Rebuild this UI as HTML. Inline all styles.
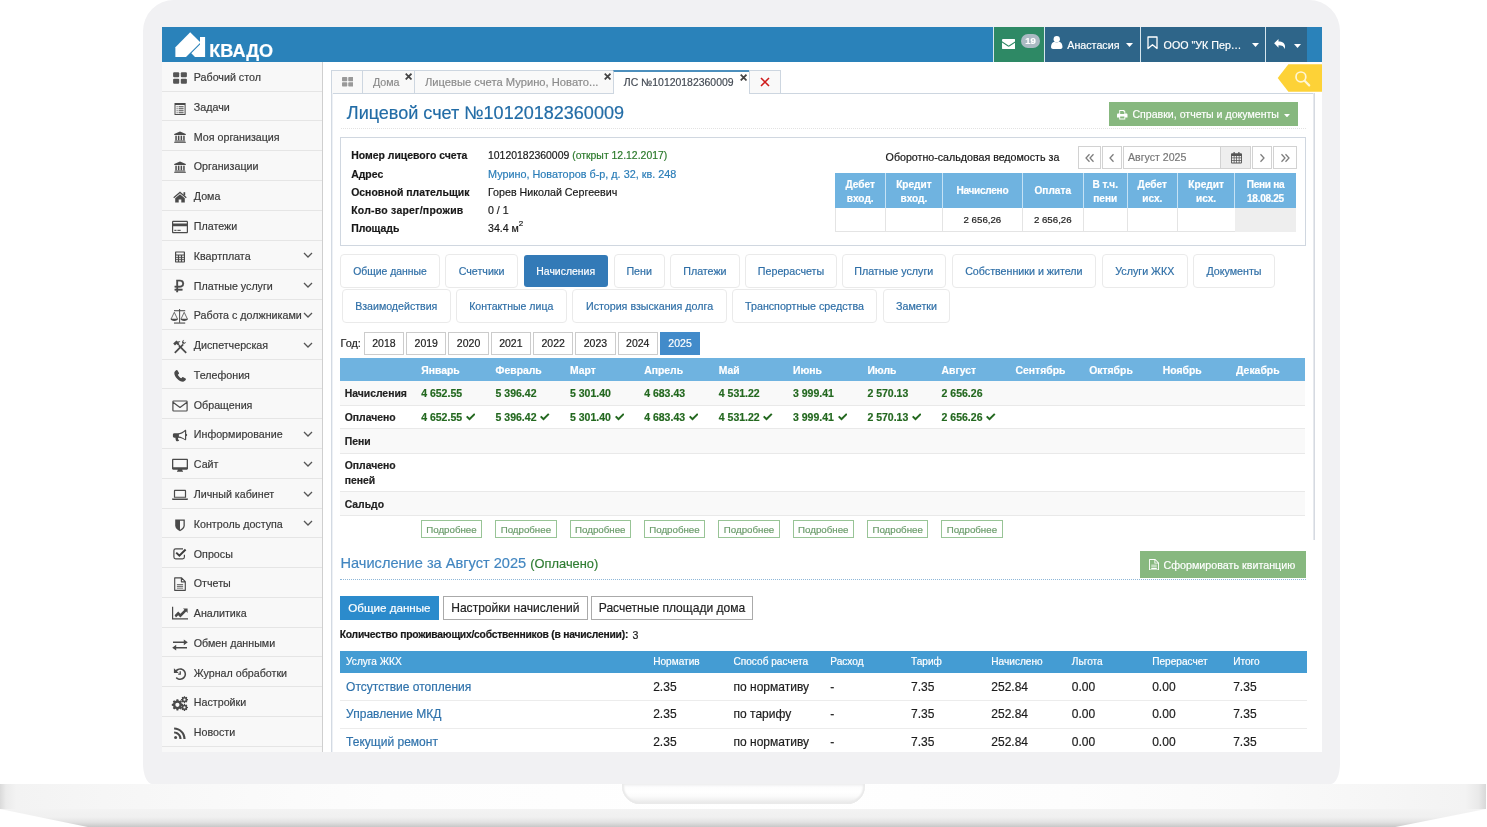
<!DOCTYPE html>
<html lang="ru">
<head>
<meta charset="utf-8">
<title>КВАДО — Лицевой счет №10120182360009</title>
<style>
*{box-sizing:border-box;margin:0;padding:0}
html,body{width:1487px;height:827px;overflow:hidden;background:#fff}
body{position:relative;font-family:"Liberation Sans",sans-serif;font-size:10.7px;color:#393939;line-height:1.2;-webkit-text-stroke:.18px}
.grp{position:absolute;left:0;top:0;width:0;height:0}
div,span,a,svg,b,i,h1,h2,p{position:absolute;white-space:nowrap}
h1,h2{font-weight:400}
i{font-style:normal}
a{text-decoration:none;color:#337ab7}
b{font-weight:700}
/* laptop */
#lid{left:143.3px;top:-.5px;width:1197.2px;height:784px;background:#f1f1f3;border-radius:31px 31px 9px 9px/31px 31px 21px 21px}
#base1{left:0;top:783.5px;width:1486px;height:25.5px;background:linear-gradient(90deg,#dadada 0,#ebebeb .4%,#f3f3f3 1.1%,#f6f6f6 7%,#fafafa 17%,#fdfdfd 26%,#fff 50%,#fdfdfd 72%,#fafafa 84%,#f6f6f6 93%,#f3f3f3 98.6%,#e9e9e9 99.5%,#d8d8d8 100%)}
#base2{left:0;top:809px;width:1486px;height:18px;background:linear-gradient(180deg,#f3f3f3 0,#f0f0f0 45%,#e3e3e3 72%,#c8c8c8 100%);clip-path:polygon(0 0,100% 0,93.9% 100%,5.9% 100%)}
#notch{left:622px;top:783.5px;width:243px;height:20px;border-radius:0 0 18px 18px;background:linear-gradient(180deg,#f3f3f4 0,#fdfdfd 18%,#fff 40%,#fbfbfb 62%,#efefef 85%,#ececec 100%);box-shadow:inset 2px 0 2px #eaeaea,inset -2px 0 2px #eaeaea,inset 0 -2px 2px #e9e9e9}
#screen{left:162px;top:27px;width:1160px;height:725px;overflow:hidden;background:#fff}
#pg{left:-162px;top:-27px;width:1487px;height:827px;will-change:transform}
/* navbar */
#nav{left:162px;top:27px;width:1160px;height:35px;background:#2a82ba}
.nv{top:27px;height:35px;color:#fff;font-size:10.7px}
.nv span{top:11.5px}
/* sidebar */
#sb{left:162px;top:62px;width:160.5px;height:690px;background:#f8f8f8}
#sbr{left:322.3px;top:62px;width:1px;height:690px;background:#cfcfcf}
.sl{left:162px;width:160.3px;height:1px;background:#e5e5e5}
svg.ic{left:170px;width:20px;height:20px;fill:#4a4a4a}
svg.ch{left:302.5px;width:10px;height:10px;fill:none;stroke:#555;stroke-width:1.3}
</style>
</head>
<body>
<div id="lid"></div>
<div id="base1"></div>
<div id="base2"></div>
<div id="notch"></div>
<div id="screen"><div id="pg">
<header class="grp">
<div id="nav"></div>
<svg style="left:174px;top:31px;width:33px;height:27px" viewBox="174 31 33 27"><path fill="#fff" d="M175.4 47.2 190.2 32.3 200.5 42.6 186 57H175.4Z"/><path fill="#fff" d="M200 37h5.1v20H195l-3.7-3.7 8.7-8.8Z"/></svg>
<b style="left:209.2px;top:41px;font-size:18.1px;color:#fff;font-weight:700">КВАДО</b>
<div class="nv" style="left:993px;width:1px;background:#d6e6ee"></div>
<div class="nv" style="left:994px;width:50px;background:#2e8965">
 <svg style="left:7.6px;top:11.5px;width:13.3px;height:10.3px" viewBox="0 0 27 21"><path fill="#fff" d="M0 4.5V2.3C0 1 1 0 2.3 0h22.4C26 0 27 1 27 2.3v2.2L14.6 13c-.7.5-1.500.5-2.200 0Z"/><path fill="#fff" d="M0 7.300 11.300 15c1.400.9 3 .9 4.400 0L27 7.300v11.400c0 1.300-1 2.300-2.300 2.300H2.300C1 21 0 20 0 18.700Z"/></svg>
 <div style="left:27px;top:7px;width:19px;height:13.5px;border-radius:7px;background:#abbac3;color:#fff;font-size:9.5px;font-weight:700;text-align:center;line-height:13.5px">19</div>
</div>
<div class="nv" style="left:1044px;width:1px;background:#d6e6ee"></div>
<div class="nv" style="left:1045px;width:95px;background:#2e6589">
 <svg style="left:6px;top:9px;width:11.5px;height:13px" viewBox="0 0 23 26"><circle cx="11.5" cy="6.500" r="6.300" fill="#fff"/><path fill="#fff" d="M0 22c0-6 3-10 7-10.500 1.300 1 2.800 1.500 4.500 1.500s3.200-.5 4.500-1.500C20 12 23 16 23 22c0 2.500-1.800 4-4 4H4c-2.200 0-4-1.500-4-4Z"/></svg>
 <span style="left:22.3px">Анастасия</span>
 <svg style="left:80.500px;top:15.500px;width:7px;height:4.4px" viewBox="0 0 8 5"><path fill="#fff" d="M0 0h8L4 4.500Z"/></svg>
</div>
<div class="nv" style="left:1140px;width:1px;background:#d6e6ee"></div>
<div class="nv" style="left:1141px;width:124px;background:#2e6589">
 <svg style="left:6px;top:9px;width:11px;height:13.5px" viewBox="0 0 22 27"><path fill="none" stroke="#fff" stroke-width="2.600" stroke-linejoin="round" d="M2 2h18v23l-9-7.500L2 25Z"/></svg>
 <span style="left:22.6px">ООО "УК Пер…</span>
 <svg style="left:110.500px;top:15.500px;width:7px;height:4.4px" viewBox="0 0 8 5"><path fill="#fff" d="M0 0h8L4 4.500Z"/></svg>
</div>
<div class="nv" style="left:1265px;width:1px;background:#d6e6ee"></div>
<div class="nv" style="left:1266px;width:41px;background:#2e6589">
 <svg style="left:8.4px;top:12.3px;width:11.2px;height:10px" viewBox="0 0 25 23"><path fill="#fff" d="M10 0v5.500c9 0 15 4 15 12 0 2-.5 4-1.500 5.500-.8-6-5-8.500-13.500-8.500V20L0 10Z"/></svg>
 <svg style="left:27.500px;top:16.5px;width:7px;height:4.4px" viewBox="0 0 8 5"><path fill="#fff" d="M0 0h8L4 4.500Z"/></svg>
</div>
</header>
<aside class="grp">
<div id="sb"></div>
<div class="sl" style="top:91px"></div><svg class="ic" style="top:68.1px" viewBox="0 0 20 20"><g fill="#555"><rect x="3.100" y="4.300" width="6.100" height="4.900" rx="1"/><rect x="10.800" y="4.300" width="6.100" height="4.900" rx="1"/><rect x="3.100" y="10.800" width="6.100" height="4.900" rx="1"/><rect x="10.800" y="10.800" width="6.100" height="4.900" rx="1"/></g></svg><span style="left:193.8px;top:71px;font-size:10.7px;color:#3a3a3a">Рабочий стол</span>
<div class="sl" style="top:120px"></div><svg class="ic" style="top:98.78px" viewBox="0 0 20 20"><path fill-rule="evenodd" d="M4.500 4h11.100v12H4.500ZM5.500 5.900v9.100h9.100V5.900Z"/><path d="M6.600 7.200h1v1h-1ZM8.600 7.200h5v1h-5ZM6.600 9.200h1v1h-1ZM8.600 9.200h5v1h-5ZM6.600 11.200h1v1h-1ZM8.600 11.200h5v1h-5ZM6.600 13.200h1v1h-1ZM8.600 13.200h5v1h-5Z"/></svg><span style="left:193.8px;top:101px;font-size:10.7px;color:#3a3a3a">Задачи</span>
<div class="sl" style="top:150px"></div><svg class="ic" style="top:126.96px" viewBox="0 0 20 20"><path d="M10 4.400 15.800 7v1.100H4.200V7Z"/><rect x="5.300" y="8.700" width="1.500" height="4.600"/><rect x="7.900" y="8.700" width="1.500" height="4.600"/><rect x="10.600" y="8.700" width="1.500" height="4.600"/><rect x="13.200" y="8.700" width="1.500" height="4.600"/><rect x="4.800" y="13.500" width="10.400" height="1"/><rect x="4.200" y="14.800" width="11.600" height="1"/></svg><span style="left:193.8px;top:131px;font-size:10.7px;color:#3a3a3a">Моя организация</span>
<div class="sl" style="top:180px"></div><svg class="ic" style="top:156.74px" viewBox="0 0 20 20"><path d="M10 4.400 15.800 7v1.100H4.200V7Z"/><rect x="5.300" y="8.700" width="1.500" height="4.600"/><rect x="7.900" y="8.700" width="1.500" height="4.600"/><rect x="10.600" y="8.700" width="1.500" height="4.600"/><rect x="13.200" y="8.700" width="1.500" height="4.600"/><rect x="4.800" y="13.500" width="10.400" height="1"/><rect x="4.200" y="14.800" width="11.600" height="1"/></svg><span style="left:193.8px;top:160px;font-size:10.7px;color:#3a3a3a">Организации</span>
<div class="sl" style="top:210px"></div><svg class="ic" style="top:187.12px" viewBox="0 0 20 20"><path d="M10 4.500 16.700 10.200 15.900 11.200 10 6.300 4.100 11.200 3.300 10.200Z"/><rect x="13.500" y="5.200" width="1.700" height="3.200"/><path d="M10 7.300 14.800 11.300V15.500H11.300V12.500H8.700V15.500H5.200V11.300Z"/></svg><span style="left:193.8px;top:190px;font-size:10.7px;color:#3a3a3a">Дома</span>
<div class="sl" style="top:240px"></div><svg class="ic" style="top:217.3px" viewBox="0 0 20 20"><path fill-rule="evenodd" d="M3.300 3.800h13.400c.8 0 1.300.6 1.300 1.300v9.800c0 .7-.5 1.300-1.300 1.300H3.300c-.8 0-1.300-.6-1.300-1.300V5.100c0-.7.500-1.300 1.300-1.300ZM3.200 5v1.500h13.600V5ZM3.200 9.300v5.700h13.600V9.300Z"/><rect x="4.300" y="12.800" width="2.200" height="1.100"/><rect x="7.400" y="12.800" width="3.300" height="1.100"/></svg><span style="left:193.8px;top:220px;font-size:10.7px;color:#3a3a3a">Платежи</span>
<div class="sl" style="top:269px"></div><svg class="ic" style="top:246.68px" viewBox="0 0 20 20"><path fill-rule="evenodd" d="M6 4.400h8c.6 0 1 .4 1 1v9.200c0 .6-.4 1-1 1H6c-.6 0-1-.4-1-1V5.400c0-.6.400-1 1-1ZM6.200 5.600v2h7.600v-2ZM6.200 8.600v1.400h1.600V8.600ZM9.200 8.600v1.400h1.600V8.600ZM12.200 8.600v1.400h1.600V8.600ZM6.200 10.800v1.400h1.600v-1.400ZM9.200 10.800v1.400h1.600v-1.400ZM12.200 10.800v1.400h1.600v-1.400ZM6.200 13v1.400h1.600V13ZM9.200 13v1.400h1.600V13ZM12.200 13v1.400h1.600V13Z"/></svg><span style="left:193.8px;top:250px;font-size:10.7px;color:#3a3a3a">Квартплата</span><svg class="ch" style="top:250.38px" viewBox="0 0 10 10"><path d="M1 3 5 7 9 3"/></svg>
<div class="sl" style="top:299px"></div><i style="left:174.3px;top:277px;font-size:16.2px;color:#4a4a4a;font-weight:400;font-family:'DejaVu Sans',sans-serif;-webkit-text-stroke:.3px #4a4a4a">₽</i><span style="left:193.8px;top:280px;font-size:10.7px;color:#3a3a3a">Платные услуги</span><svg class="ch" style="top:280.16px" viewBox="0 0 10 10"><path d="M1 3 5 7 9 3"/></svg>
<div class="sl" style="top:329px"></div><svg class="ic" style="top:306.24px" viewBox="0 0 20 20"><rect x="4" y="4" width="11.200" height="1.300" fill="#6a6a6a"/><rect x="9.100" y="3" width="1" height="13.800"/><rect x="4" y="16.500" width="11.200" height="1.100"/><path fill="none" stroke="#4a4a4a" stroke-width=".8" d="M4.300 6.300 1.100 13M4.300 6.300 7.500 13M14.200 6.300 11 13M14.200 6.300 17.400 13"/><path d="M.600 12.800h7.400c0 1.300-1.700 2.100-3.700 2.100s-3.700-.8-3.700-2.100ZM10.500 12.800h7.400c0 1.300-1.700 2.100-3.700 2.100s-3.700-.8-3.700-2.100Z"/></svg><span style="left:193.8px;top:309px;font-size:10.7px;color:#3a3a3a">Работа с должниками</span><svg class="ch" style="top:309.94px" viewBox="0 0 10 10"><path d="M1 3 5 7 9 3"/></svg>
<div class="sl" style="top:359px"></div><svg class="ic" style="top:336.62px" viewBox="0 0 20 20"><path d="M4.200 15.200 12.600 6.800 13.800 8 5.400 16.400Z"/><path d="M12.200 6.200c-.5-1.500.3-3.100 1.900-3.500l-.9 1.700 1.300 1.300 1.700-.9c-.4 1.600-2 2.400-3.500 1.900Z"/><path d="M15.600 16.400 8.200 9 9.400 7.800 16.800 15.200Z"/><path d="M3.200 6.600 6.400 3.600 7.600 4.600 9.800 4.200 10.400 4.800 8.400 5.800 9.600 7.200 8.200 8.600 6.600 7 5 8.600Z"/></svg><span style="left:193.8px;top:339px;font-size:10.7px;color:#3a3a3a">Диспетчерская</span><svg class="ch" style="top:339.72px" viewBox="0 0 10 10"><path d="M1 3 5 7 9 3"/></svg>
<div class="sl" style="top:388px"></div><svg class="ic" style="top:365.8px" viewBox="0 0 20 20"><path d="M6.300 4.200c.4-.3.900-.2 1.200.2l1.400 2.300c.3.500.1.900-.2 1.200l-.9.800c.7 1.500 2 2.800 3.500 3.600l.8-.9c.3-.3.800-.5 1.200-.2l2.300 1.400c.4.300.5.800.2 1.200-.8 1.100-1.700 1.900-2.800 1.900C9.100 15.700 4.300 10.900 4.300 7c0-1.100.8-2 2-2.800Z"/></svg><span style="left:193.8px;top:369px;font-size:10.7px;color:#3a3a3a">Телефония</span>
<div class="sl" style="top:418px"></div><svg class="ic" style="top:396.18px" viewBox="0 0 20 20"><path fill="none" stroke="#4a4a4a" stroke-width="1.200" stroke-linejoin="round" d="M3.700 5h12.600c.5 0 .8.300.8.800v8.400c0 .5-.3.800-.8.800H3.700c-.5 0-.8-.3-.8-.8V5.800c0-.5.300-.8.800-.8ZM3 6.300 10 11.500 17 6.300"/></svg><span style="left:193.8px;top:399px;font-size:10.7px;color:#3a3a3a">Обращения</span>
<div class="sl" style="top:448px"></div><svg class="ic" style="top:426.36px" viewBox="0 0 20 20"><path d="M15.200 3.800c.5-.2 1 .1 1 .7v3.200c.6.200 1 .7 1 1.300s-.4 1.100-1 1.300v3.200c0 .6-.5.900-1 .7-2.200-1.400-4.300-2.300-6.700-2.500-.6.400-.7 1-.3 1.500.2.500.7.900 1 1.400-.5.900-2.300 1-3 .3-.4-1.100-.9-2.100-.7-3.200H4.300c-.8 0-1.400-.6-1.400-1.400V8.700c0-.8.600-1.400 1.400-1.400h3.500c2.700-.1 5.100-1.500 7.400-3.500ZM15 5.500c-1.900 1.500-3.900 2.600-6.100 2.900v2.200c2.200.3 4.200 1.300 6.100 2.700Z" fill-rule="evenodd"/></svg><span style="left:193.8px;top:428px;font-size:10.7px;color:#3a3a3a">Информирование</span><svg class="ch" style="top:429.06px" viewBox="0 0 10 10"><path d="M1 3 5 7 9 3"/></svg>
<div class="sl" style="top:478px"></div><svg class="ic" style="top:455.14px" viewBox="0 0 20 20"><path fill-rule="evenodd" d="M3.200 3.800h13.600c.7 0 1.200.5 1.200 1.200v8.600c0 .7-.5 1.200-1.200 1.200h-4.600c0 .6.300 1.100.8 1.400v.6H7v-.6c.5-.3.800-.8.800-1.400H3.200c-.7 0-1.200-.5-1.200-1.200V5c0-.7.500-1.200 1.200-1.200ZM3.300 5v7.200h13.400V5Z"/></svg><span style="left:193.8px;top:458px;font-size:10.7px;color:#3a3a3a">Сайт</span><svg class="ch" style="top:458.84px" viewBox="0 0 10 10"><path d="M1 3 5 7 9 3"/></svg>
<div class="sl" style="top:508px"></div><svg class="ic" style="top:484.92px" viewBox="0 0 20 20"><path fill-rule="evenodd" d="M5 4.800h10c.6 0 1.100.5 1.100 1.100v6.900H3.900V5.900c0-.6.5-1.100 1.100-1.100ZM5.100 5.900v5.800h9.800v-5.800Z"/><path d="M2 13.500h16v.4c0 .6-.6 1-1.300 1H3.300c-.7 0-1.300-.4-1.300-1Z"/></svg><span style="left:193.8px;top:488px;font-size:10.7px;color:#3a3a3a">Личный кабинет</span><svg class="ch" style="top:488.62px" viewBox="0 0 10 10"><path d="M1 3 5 7 9 3"/></svg>
<div class="sl" style="top:537px"></div><svg class="ic" style="top:514.7px" viewBox="0 0 20 20"><path d="M5.200 4.400h9.600v6.200c0 2.400-1.900 4.200-4.800 5.600-2.900-1.400-4.800-3.200-4.800-5.600Z"/><path fill="#f8f8f8" d="M10 5.700h3.500v4.900c0 1.700-1.300 3-3.500 4.100Z"/></svg><span style="left:193.8px;top:518px;font-size:10.7px;color:#3a3a3a">Контроль доступа</span><svg class="ch" style="top:518.4px" viewBox="0 0 10 10"><path d="M1 3 5 7 9 3"/></svg>
<div class="sl" style="top:567px"></div><svg class="ic" style="top:544.48px" viewBox="0 0 20 20"><path fill="none" stroke="#4a4a4a" stroke-width="1.200" d="M14.400 10.800v2.200c0 1-.8 1.800-1.800 1.800H5.700c-1 0-1.800-.8-1.800-1.800V6.600c0-1 .8-1.800 1.800-1.800h7.300"/><path fill="none" stroke="#3c3c3c" stroke-width="2" d="M6.200 8.600 9.400 11.700 15.600 5.500"/></svg><span style="left:193.8px;top:548px;font-size:10.7px;color:#3a3a3a">Опросы</span>
<div class="sl" style="top:597px"></div><svg class="ic" style="top:574.26px" viewBox="0 0 20 20"><path fill="none" stroke="#4a4a4a" stroke-width="1.150" stroke-linejoin="round" d="M4.700 3.900h6.900l3.700 3.700v8.700H4.700ZM11.400 4.100v3.700h3.700"/><path d="M6.900 9.900h6.200v.9H6.900ZM6.900 11.800h6.200v.9H6.900ZM6.900 13.700h6.200v.9H6.900Z"/></svg><span style="left:193.8px;top:577px;font-size:10.7px;color:#3a3a3a">Отчеты</span>
<div class="sl" style="top:627px"></div><svg class="ic" style="top:603.34px" viewBox="0 0 20 20"><path d="M2 3.800h1.200v11.400H18v1.200H2Z"/><path d="M4.600 12.200 8.200 8.600 10.400 10.800 14.400 6.800 13 5.400H17.600V10L16.200 8.600 10.400 14.400 8.200 12.200 6 14.400Z"/></svg><span style="left:193.8px;top:607px;font-size:10.7px;color:#3a3a3a">Аналитика</span>
<div class="sl" style="top:656px"></div><svg class="ic" style="top:634.52px" viewBox="0 0 20 20"><path d="M3 6.600h10.800V4.400L17.800 7.300 13.800 10.200V8H3Z"/><path d="M17 13.400H6.200V15.600L2.200 12.700 6.200 9.800V12H17Z"/></svg><span style="left:193.8px;top:637px;font-size:10.7px;color:#3a3a3a">Обмен данными</span>
<div class="sl" style="top:686px"></div><svg class="ic" style="top:663.6px" viewBox="0 0 20 20"><path d="M10.200 4.200c3.300 0 5.900 2.600 5.900 5.900s-2.600 5.900-5.900 5.900c-1.800 0-3.400-.8-4.500-2.100l1.200-1c.8 1 2 1.600 3.300 1.600 2.400 0 4.400-2 4.400-4.400s-2-4.400-4.400-4.400c-1.300 0-2.500.6-3.300 1.500L8.700 9H3.900V4.200l1.900 1.900c1.100-1.200 2.700-1.900 4.400-1.900Z"/><path d="M9.600 7.200h1.300v3.500H8.200V9.500h1.400Z"/></svg><span style="left:193.8px;top:667px;font-size:10.7px;color:#3a3a3a">Журнал обработки</span>
<div class="sl" style="top:716px"></div><svg class="ic" style="top:693.88px" viewBox="0 0 20 20"><path fill-rule="evenodd" d="M6.500 5.200h1.800l.3 1.300 1 .4 1.100-.7 1.300 1.300-.7 1.100.4 1 1.300.3v1.800l-1.300.3-.4 1 .7 1.100-1.300 1.300-1.100-.7-1 .4-.3 1.300H6.500l-.3-1.300-1-.4-1.100.7-1.300-1.300.7-1.100-.4-1-1.300-.3V9.900l1.300-.3.4-1-.7-1.100 1.300-1.300 1.100.7 1-.4ZM7.400 8.700a2.100 2.100 0 1 0 0 4.200 2.100 2.100 0 1 0 0-4.200Z"/><path fill-rule="evenodd" d="M14.700 2.800h1.200l.2.900.7.300.8-.5.800.8-.5.800.3.700.9.200v1.200l-.9.200-.3.700.5.800-.8.800-.8-.5-.7.300-.2.900h-1.200l-.2-.9-.7-.3-.8.500-.800-.8.500-.8-.3-.7-.9-.2V6l.9-.2.3-.7-.5-.8.800-.8.800.5.700-.3ZM15.300 5.400a1.200 1.200 0 1 0 0 2.400 1.200 1.200 0 1 0 0-2.400Z" transform="translate(.4 -.4) scale(.92)"/><path fill-rule="evenodd" d="M14.700 2.800h1.200l.2.900.7.300.8-.5.800.8-.5.800.3.700.9.200v1.200l-.9.200-.3.700.5.800-.8.800-.8-.5-.7.300-.2.900h-1.200l-.2-.9-.7-.3-.8.500-.800-.8.500-.8-.3-.7-.9-.2V6l.9-.2.3-.7-.5-.8.800-.8.800.5.700-.3ZM15.300 5.400a1.200 1.200 0 1 0 0 2.400 1.200 1.200 0 1 0 0-2.400Z" transform="translate(.4 7.400) scale(.92)"/></svg><span style="left:193.8px;top:696px;font-size:10.7px;color:#3a3a3a">Настройки</span>
<div class="sl" style="top:746px"></div><svg class="ic" style="top:723.16px" viewBox="0 0 20 20"><circle cx="5.600" cy="14.400" r="1.500"/><path d="M4.100 8.400c4.100 0 7.500 3.400 7.500 7.500H9.400c0-2.900-2.400-5.300-5.300-5.300Z"/><path d="M4.100 4.400c6.300 0 11.500 5.200 11.500 11.500h-2.200c0-5.100-4.200-9.300-9.300-9.300Z"/></svg><span style="left:193.8px;top:726px;font-size:10.7px;color:#3a3a3a">Новости</span>
<div id="sbr"></div>
</aside>
<main class="grp">
<!-- tabs -->
<div style="left:331px;top:93px;width:984px;height:1px;background:#cdd6e0"></div><div style="left:331px;top:93px;width:2px;height:667px;background:linear-gradient(90deg,#d3dae3 0,#d3dae3 50%,#eef1f5 50%)"></div><div style="left:1313px;top:93px;width:2px;height:447px;background:linear-gradient(90deg,#e6e9ee 0,#e6e9ee 50%,#d6dae1 50%)"></div><div style="left:331px;top:70px;width:32px;height:23px;background:#f9f9f9;border:1px solid #cdd6e0;border-bottom:0"><svg style="left:9.5px;top:6px;width:11.5px;height:9.5px" viewBox="0 0 14 11.6"><g fill="#999"><rect width="6.4" height="5.2" rx=".9"/><rect x="7.6" width="6.4" height="5.2" rx=".9"/><rect y="6.400" width="6.4" height="5.2" rx=".9"/><rect x="7.6" y="6.400" width="6.4" height="5.2" rx=".9"/></g></svg></div><div style="left:362px;top:70px;width:53px;height:23px;background:#f9f9f9;border:1px solid #cdd6e0;border-bottom:0"></div><div style="left:414px;top:70px;width:200px;height:23px;background:#f9f9f9;border:1px solid #cdd6e0;border-bottom:0"></div><div style="left:613px;top:70px;width:137px;height:24px;background:#fff;border:1px solid #cdd6e0;border-top:2px solid #4c8fbd;border-bottom:0"></div><div style="left:749px;top:70px;width:32px;height:23px;background:#f9f9f9;border:1px solid #cdd6e0;border-bottom:0"></div><span style="left:372.9px;top:76px;font-size:10.7px;color:#8c8c8c">Дома</span><svg style="left:405px;top:73px;width:7.2px;height:7.2px" viewBox="0 0 10 10"><path d="M1 1 9 9M9 1 1 9" stroke="#444" stroke-width="2.36" fill="none"/></svg><span style="left:424.9px;top:76px;font-size:11.2px;color:#8c8c8c">Лицевые счета Мурино, Новато...</span><svg style="left:603.8px;top:73px;width:7.2px;height:7.2px" viewBox="0 0 10 10"><path d="M1 1 9 9M9 1 1 9" stroke="#444" stroke-width="2.36" fill="none"/></svg><span style="left:623.8px;top:77px;font-size:10.45px;color:#434a54">ЛС №10120182360009</span><svg style="left:739.6px;top:73.9px;width:7.2px;height:7.2px" viewBox="0 0 10 10"><path d="M1 1 9 9M9 1 1 9" stroke="#444" stroke-width="2.36" fill="none"/></svg><svg style="left:759.8px;top:76.9px;width:10px;height:10px" viewBox="0 0 10 10"><path d="M1 1 9 9M9 1 1 9" stroke="#cf1b1b" stroke-width="1.6" fill="none"/></svg>
<!-- yellow search tag -->
<svg style="left:1277px;top:64px;width:45px;height:28px" viewBox="1277 64 45 28"><path fill="#fdd237" d="M1277.7 77.900 1288.400 64.200H1322V91.700H1288.400Z"/><circle cx="1300.900" cy="76.900" r="4.900" fill="none" stroke="#fff6d4" stroke-width="1.700"/><path d="M1304.600 80.800 1309.200 85.400" stroke="#fff6d4" stroke-width="2.200" stroke-linecap="round"/></svg>
<!-- page header -->
<h1 style="left:346.8px;top:103px;font-size:18.05px;color:#226ca6;font-weight:400;line-height:1.2">Лицевой счет №10120182360009</h1><div style="left:341px;top:128.2px;width:964.5px;height:1px;border-top:1px dotted #e2e2e2"></div><div style="left:1108.6px;top:101.9px;width:189.3px;height:23.8px;background:#87b87f"><svg style="left:8.5px;top:8.2px;width:10.5px;height:9.5px" viewBox="0 0 21 19"><path fill="#fff" fill-rule="evenodd" d="M4.500 0h9.500l2.500 2.500V7h2.300c1.200 0 2.200 1 2.200 2.200V15h-4.500v4h-12v-4H0V9.200C0 8 1 7 2.200 7H4.500ZM6.300 1.800V8h8.400V3.600h-1.800V1.800ZM6.300 13v4.200h8.400V13Z"/></svg><svg style="left:175px;top:11.8px;width:6px;height:3.4px" viewBox="0 0 7 4"><path fill="#fff" d="M0 0h7L3.500 4Z"/></svg></div><span style="left:1132.4px;top:108px;font-size:10.6px;color:#fff">Справки, отчеты и документы</span>
<!-- info box -->
<div style="left:340px;top:137px;width:966px;height:109px;border:1px solid #d0d7e0;background:#fff"></div><b style="left:351.2px;top:150px;font-size:10.45px;color:#181818;font-weight:700">Номер лицевого счета</b><b style="left:351.2px;top:169px;font-size:10.45px;color:#181818;font-weight:700">Адрес</b><b style="left:351.2px;top:187px;font-size:10.45px;color:#181818;font-weight:700">Основной плательщик</b><b style="left:351.2px;top:205px;font-size:10.45px;color:#181818;font-weight:700;letter-spacing:.25px">Кол-во зарег/прожив</b><b style="left:351.2px;top:223px;font-size:10.45px;color:#181818;font-weight:700">Площадь</b><span style="left:488px;top:150px;font-size:10.45px;color:#181818">10120182360009 <span style="position:static;color:#2c7a2c">(открыт 12.12.2017)</span></span><a style="left:488px;top:168px;font-size:10.84px;color:#2a7db8">Мурино, Новаторов б-р, д. 32, кв. 248</a><span style="left:488px;top:186px;font-size:10.69px;color:#181818">Горев Николай Сергеевич</span><span style="left:488px;top:204px;font-size:10.6px;color:#181818">0 / 1</span><span style="left:488px;top:222px;font-size:10.6px;color:#181818">34.4 м<sup style="font-size:8px;position:relative;top:-1px;vertical-align:super;line-height:0">2</sup></span><span style="left:885.6px;top:151px;font-size:10.67px;color:#161616">Оборотно-сальдовая ведомость за</span><div style="left:1078px;top:146px;width:23px;height:23px;border:1px solid #d2d2d2;background:#fff"><svg style="left:50%;top:50%;width:12px;height:10px;margin:-5px 0 0 -6px" viewBox="0 0 12 10"><path d="M5.500 1.300 2 5l3.500 3.700M9.500 1.300 6 5l3.500 3.700" fill="none" stroke="#7c7c7c" stroke-width="1.250"/></svg></div><div style="left:1102px;top:146px;width:20px;height:23px;border:1px solid #d2d2d2;background:#fff"><svg style="left:50%;top:50%;width:12px;height:10px;margin:-5px 0 0 -6px" viewBox="0 0 12 10"><path d="M7.500 1.300 4 5l3.500 3.700" fill="none" stroke="#7c7c7c" stroke-width="1.250"/></svg></div><div style="left:1123px;top:146px;width:98px;height:23px;border:1px solid #d2d2d2;background:#fff"></div><span style="left:1128px;top:151px;font-size:10.6px;color:#777">Август 2025</span><div style="left:1220px;top:146px;width:31px;height:23px;border:1px solid #d2d2d2;background:#eee"><svg style="left:9.5px;top:5px;width:11px;height:11.5px" viewBox="0 0 22 23"><path fill="#555" fill-rule="evenodd" d="M5 0h2.500v2.500h7V0H17v2.500h3.200c1 0 1.800.8 1.800 1.800v16.900c0 1-.8 1.800-1.800 1.800H1.800C.8 23 0 22.200 0 21.200V4.300c0-1 .8-1.800 1.800-1.800H5ZM1.800 8v3.200h3.700V8ZM7 8v3.200h3.500V8ZM12 8v3.200h3.500V8ZM17 8v3.200h3.200V8ZM1.800 12.700v3.500h3.700v-3.500ZM7 12.700v3.500h3.500v-3.500ZM12 12.700v3.500h3.500v-3.500ZM17 12.700v3.500h3.200v-3.500ZM1.800 17.700v3.500h3.700v-3.500ZM7 17.700v3.500h3.500v-3.500ZM12 17.700v3.500h3.500v-3.500ZM17 17.700v3.500h3.200v-3.500Z"/></svg></div><div style="left:1252px;top:146px;width:20px;height:23px;border:1px solid #d2d2d2;background:#fff"><svg style="left:50%;top:50%;width:12px;height:10px;margin:-5px 0 0 -6px" viewBox="0 0 12 10"><path d="M4.500 1.300 8 5 4.500 8.700" fill="none" stroke="#7c7c7c" stroke-width="1.250"/></svg></div><div style="left:1273px;top:146px;width:24px;height:23px;border:1px solid #d2d2d2;background:#fff"><svg style="left:50%;top:50%;width:12px;height:10px;margin:-5px 0 0 -6px" viewBox="0 0 12 10"><path d="M2.500 1.300 6 5 2.500 8.700M6.500 1.300 10 5 6.500 8.700" fill="none" stroke="#7c7c7c" stroke-width="1.250"/></svg></div><div style="left:835px;top:172.6px;width:461.1px;height:35.6px;background:#6fb3e0"></div><div style="left:835px;top:208.2px;width:461.1px;height:23.4px;border:1px solid #e4e4e4;border-top:0;background:#fff"></div><div style="left:1234.9px;top:208.2px;width:61.2px;height:23.4px;background:#eee"></div><b style="left:860.2px;top:179px;font-size:10.1px;color:#fff;font-weight:700;transform:translateX(-50%)">Дебет</b><b style="left:860.2px;top:193px;font-size:10.1px;color:#fff;font-weight:700;transform:translateX(-50%)">вход.</b><div style="left:884.9px;top:172.6px;width:1px;height:35.6px;background:#c5e2f5"></div><div style="left:884.9px;top:208.2px;width:1px;height:23.4px;background:#e4e4e4"></div><b style="left:913.9px;top:179px;font-size:10.1px;color:#fff;font-weight:700;transform:translateX(-50%)">Кредит</b><b style="left:913.9px;top:193px;font-size:10.1px;color:#fff;font-weight:700;transform:translateX(-50%)">вход.</b><div style="left:941.9px;top:172.6px;width:1px;height:35.6px;background:#c5e2f5"></div><div style="left:941.9px;top:208.2px;width:1px;height:23.4px;background:#e4e4e4"></div><b style="left:982.4px;top:185px;font-size:10.1px;color:#fff;font-weight:700;transform:translateX(-50%);letter-spacing:-.3px">Начислено</b><span style="left:982.4px;top:214px;font-size:9.7px;color:#222;transform:translateX(-50%)">2 656,26</span><div style="left:1021.9px;top:172.6px;width:1px;height:35.6px;background:#c5e2f5"></div><div style="left:1021.9px;top:208.2px;width:1px;height:23.4px;background:#e4e4e4"></div><b style="left:1052.75px;top:185px;font-size:10.1px;color:#fff;font-weight:700;transform:translateX(-50%)">Оплата</b><span style="left:1052.75px;top:214px;font-size:9.7px;color:#222;transform:translateX(-50%)">2 656,26</span><div style="left:1082.6px;top:172.6px;width:1px;height:35.6px;background:#c5e2f5"></div><div style="left:1082.6px;top:208.2px;width:1px;height:23.4px;background:#e4e4e4"></div><b style="left:1105.2px;top:179px;font-size:10.1px;color:#fff;font-weight:700;transform:translateX(-50%)">В т.ч.</b><b style="left:1105.2px;top:193px;font-size:10.1px;color:#fff;font-weight:700;transform:translateX(-50%)">пени</b><div style="left:1126.8px;top:172.6px;width:1px;height:35.6px;background:#c5e2f5"></div><div style="left:1126.8px;top:208.2px;width:1px;height:23.4px;background:#e4e4e4"></div><b style="left:1152.3px;top:179px;font-size:10.1px;color:#fff;font-weight:700;transform:translateX(-50%)">Дебет</b><b style="left:1152.3px;top:193px;font-size:10.1px;color:#fff;font-weight:700;transform:translateX(-50%)">исх.</b><div style="left:1176.8px;top:172.6px;width:1px;height:35.6px;background:#c5e2f5"></div><div style="left:1176.8px;top:208.2px;width:1px;height:23.4px;background:#e4e4e4"></div><b style="left:1206.1px;top:179px;font-size:10.1px;color:#fff;font-weight:700;transform:translateX(-50%)">Кредит</b><b style="left:1206.1px;top:193px;font-size:10.1px;color:#fff;font-weight:700;transform:translateX(-50%)">исх.</b><div style="left:1234.4px;top:172.6px;width:1px;height:35.6px;background:#c5e2f5"></div><b style="left:1265.5px;top:179px;font-size:10.1px;color:#fff;font-weight:700;transform:translateX(-50%);letter-spacing:-.3px">Пени на</b><b style="left:1265.5px;top:193px;font-size:10.1px;color:#fff;font-weight:700;transform:translateX(-50%);letter-spacing:-.3px">18.08.25</b>
<!-- pills -->
<div style="left:340px;top:254px;width:100px;height:34px;background:#fff;border:1px solid #eaeaea;border-radius:4px"></div><a style="left:390px;top:266px;font-size:10.4px;color:#2f6fa7;transform:translateX(-50%)">Общие данные</a><div style="left:445px;top:254px;width:73px;height:34px;background:#fff;border:1px solid #eaeaea;border-radius:4px"></div><a style="left:481.6px;top:265px;font-size:10.7px;color:#2f6fa7;transform:translateX(-50%)">Счетчики</a><div style="left:524px;top:255px;width:84px;height:32px;background:#337ab7;border-radius:3px"></div><a style="left:565.7px;top:266px;font-size:10.45px;color:#fff;transform:translateX(-50%)">Начисления</a><div style="left:614px;top:254px;width:51px;height:34px;background:#fff;border:1px solid #eaeaea;border-radius:4px"></div><a style="left:639.15px;top:265px;font-size:10.7px;color:#2f6fa7;transform:translateX(-50%)">Пени</a><div style="left:670px;top:254px;width:70px;height:34px;background:#fff;border:1px solid #eaeaea;border-radius:4px"></div><a style="left:704.9px;top:265px;font-size:10.7px;color:#2f6fa7;transform:translateX(-50%)">Платежи</a><div style="left:745px;top:254px;width:92px;height:34px;background:#fff;border:1px solid #eaeaea;border-radius:4px"></div><a style="left:791px;top:265px;font-size:10.7px;color:#2f6fa7;transform:translateX(-50%)">Перерасчеты</a><div style="left:842px;top:254px;width:104px;height:34px;background:#fff;border:1px solid #eaeaea;border-radius:4px"></div><a style="left:893.75px;top:265px;font-size:10.7px;color:#2f6fa7;transform:translateX(-50%)">Платные услуги</a><div style="left:952px;top:254px;width:144px;height:34px;background:#fff;border:1px solid #eaeaea;border-radius:4px"></div><a style="left:1023.85px;top:265px;font-size:10.7px;color:#2f6fa7;transform:translateX(-50%)">Собственники и жители</a><div style="left:1102px;top:254px;width:86px;height:34px;background:#fff;border:1px solid #eaeaea;border-radius:4px"></div><a style="left:1144.8px;top:265px;font-size:10.7px;color:#2f6fa7;transform:translateX(-50%)">Услуги ЖКХ</a><div style="left:1193px;top:254px;width:82px;height:34px;background:#fff;border:1px solid #eaeaea;border-radius:4px"></div><a style="left:1233.95px;top:265px;font-size:10.7px;color:#2f6fa7;transform:translateX(-50%)">Документы</a><div style="left:342px;top:289px;width:109px;height:34px;background:#fff;border:1px solid #eaeaea;border-radius:4px"></div><a style="left:396.25px;top:300px;font-size:10.62px;color:#2f6fa7;transform:translateX(-50%)">Взаимодействия</a><div style="left:456px;top:289px;width:111px;height:34px;background:#fff;border:1px solid #eaeaea;border-radius:4px"></div><a style="left:511.25px;top:300px;font-size:10.55px;color:#2f6fa7;transform:translateX(-50%)">Контактные лица</a><div style="left:572px;top:289px;width:155px;height:34px;background:#fff;border:1px solid #eaeaea;border-radius:4px"></div><a style="left:649.55px;top:300px;font-size:10.7px;color:#2f6fa7;transform:translateX(-50%)">История взыскания долга</a><div style="left:732px;top:289px;width:145px;height:34px;background:#fff;border:1px solid #eaeaea;border-radius:4px"></div><a style="left:804.5px;top:300px;font-size:10.7px;color:#2f6fa7;transform:translateX(-50%)">Транспортные средства</a><div style="left:883px;top:289px;width:67px;height:34px;background:#fff;border:1px solid #eaeaea;border-radius:4px"></div><a style="left:916.5px;top:300px;font-size:10.7px;color:#2f6fa7;transform:translateX(-50%)">Заметки</a>
<!-- years -->
<span style="left:340.5px;top:337px;font-size:10.9px;color:#222">Год:</span><div style="left:364px;top:332px;width:40px;height:23px;background:#fff;border:1px solid #ccc"></div><span style="left:383.95px;top:337px;font-size:10.5px;color:#222;transform:translateX(-50%)">2018</span><div style="left:406px;top:332px;width:40px;height:23px;background:#fff;border:1px solid #ccc"></div><span style="left:426.25px;top:337px;font-size:10.5px;color:#222;transform:translateX(-50%)">2019</span><div style="left:448px;top:332px;width:41px;height:23px;background:#fff;border:1px solid #ccc"></div><span style="left:468.55px;top:337px;font-size:10.5px;color:#222;transform:translateX(-50%)">2020</span><div style="left:491px;top:332px;width:40px;height:23px;background:#fff;border:1px solid #ccc"></div><span style="left:510.85px;top:337px;font-size:10.5px;color:#222;transform:translateX(-50%)">2021</span><div style="left:533px;top:332px;width:40px;height:23px;background:#fff;border:1px solid #ccc"></div><span style="left:553.15px;top:337px;font-size:10.5px;color:#222;transform:translateX(-50%)">2022</span><div style="left:575px;top:332px;width:41px;height:23px;background:#fff;border:1px solid #ccc"></div><span style="left:595.45px;top:337px;font-size:10.5px;color:#222;transform:translateX(-50%)">2023</span><div style="left:618px;top:332px;width:40px;height:23px;background:#fff;border:1px solid #ccc"></div><span style="left:637.75px;top:337px;font-size:10.5px;color:#222;transform:translateX(-50%)">2024</span><div style="left:660px;top:332px;width:40px;height:23px;background:#428bca"></div><span style="left:680.05px;top:337px;font-size:10.5px;color:#fff;transform:translateX(-50%)">2025</span>
<!-- monthly table -->
<div style="left:340px;top:358px;width:965px;height:23.2px;background:#6fb3e0"></div><div style="left:340px;top:381.2px;width:965px;height:24.5px;background:#f9f9f9;border-bottom:1px solid #e9e9e9"></div><div style="left:340px;top:405.7px;width:965px;height:23.7px;background:#fff;border-bottom:1px solid #e9e9e9"></div><div style="left:340px;top:429.4px;width:965px;height:24.2px;background:#f9f9f9;border-bottom:1px solid #e9e9e9"></div><div style="left:340px;top:453.6px;width:965px;height:38.2px;background:#fff;border-bottom:1px solid #e9e9e9"></div><div style="left:340px;top:491.8px;width:965px;height:23.9px;background:#f9f9f9;border-bottom:1px solid #e9e9e9"></div><b style="left:421.2px;top:365px;font-size:10.4px;color:#fff;font-weight:700">Январь</b><b style="left:495.6px;top:365px;font-size:10.4px;color:#fff;font-weight:700">Февраль</b><b style="left:570px;top:365px;font-size:10.4px;color:#fff;font-weight:700">Март</b><b style="left:644.2px;top:365px;font-size:10.4px;color:#fff;font-weight:700">Апрель</b><b style="left:718.8px;top:365px;font-size:10.4px;color:#fff;font-weight:700">Май</b><b style="left:793px;top:365px;font-size:10.4px;color:#fff;font-weight:700">Июнь</b><b style="left:867.4px;top:365px;font-size:10.4px;color:#fff;font-weight:700">Июль</b><b style="left:941.6px;top:365px;font-size:10.4px;color:#fff;font-weight:700">Август</b><b style="left:1015.5px;top:365px;font-size:10.4px;color:#fff;font-weight:700">Сентябрь</b><b style="left:1089.2px;top:365px;font-size:10.4px;color:#fff;font-weight:700">Октябрь</b><b style="left:1162.7px;top:365px;font-size:10.4px;color:#fff;font-weight:700">Ноябрь</b><b style="left:1236.1px;top:365px;font-size:10.4px;color:#fff;font-weight:700">Декабрь</b><b style="left:344.7px;top:388px;font-size:10.4px;color:#222;font-weight:700">Начисления</b><b style="left:344.7px;top:412px;font-size:10.4px;color:#222;font-weight:700">Оплачено</b><b style="left:344.7px;top:436px;font-size:10.4px;color:#222;font-weight:700">Пени</b><b style="left:344.7px;top:460px;font-size:10.4px;color:#222;font-weight:700">Оплачено</b><b style="left:344.7px;top:475px;font-size:10.4px;color:#222;font-weight:700">пеней</b><b style="left:344.7px;top:499px;font-size:10.4px;color:#222;font-weight:700">Сальдо</b><b style="left:421.2px;top:387px;font-size:10.5px;color:#23681f;font-weight:700">4 652.55</b><b style="left:421.2px;top:411px;font-size:10.5px;color:#23681f;font-weight:700">4 652.55</b><svg style="left:465.7px;top:413.2px;width:9.5px;height:7.5px" viewBox="0 0 19 15"><path fill="#23681f" d="M0 8.200 2.800 5.400 7 9.600 16.200.4 19 3.200 7 15.200Z"/></svg><div style="left:421px;top:520px;width:61px;height:18px;border:1px solid #98c496;background:#fff"></div><span style="left:451.45px;top:524px;font-size:9.72px;color:#6b9c6b;transform:translateX(-50%)">Подробнее</span><b style="left:495.6px;top:387px;font-size:10.5px;color:#23681f;font-weight:700">5 396.42</b><b style="left:495.6px;top:411px;font-size:10.5px;color:#23681f;font-weight:700">5 396.42</b><svg style="left:540.1px;top:413.2px;width:9.5px;height:7.5px" viewBox="0 0 19 15"><path fill="#23681f" d="M0 8.200 2.800 5.400 7 9.600 16.200.4 19 3.200 7 15.200Z"/></svg><div style="left:495px;top:520px;width:62px;height:18px;border:1px solid #98c496;background:#fff"></div><span style="left:525.85px;top:524px;font-size:9.72px;color:#6b9c6b;transform:translateX(-50%)">Подробнее</span><b style="left:570px;top:387px;font-size:10.5px;color:#23681f;font-weight:700">5 301.40</b><b style="left:570px;top:411px;font-size:10.5px;color:#23681f;font-weight:700">5 301.40</b><svg style="left:614.5px;top:413.2px;width:9.5px;height:7.5px" viewBox="0 0 19 15"><path fill="#23681f" d="M0 8.200 2.800 5.400 7 9.600 16.200.4 19 3.200 7 15.200Z"/></svg><div style="left:570px;top:520px;width:61px;height:18px;border:1px solid #98c496;background:#fff"></div><span style="left:600.25px;top:524px;font-size:9.72px;color:#6b9c6b;transform:translateX(-50%)">Подробнее</span><b style="left:644.2px;top:387px;font-size:10.5px;color:#23681f;font-weight:700">4 683.43</b><b style="left:644.2px;top:411px;font-size:10.5px;color:#23681f;font-weight:700">4 683.43</b><svg style="left:688.7px;top:413.2px;width:9.5px;height:7.5px" viewBox="0 0 19 15"><path fill="#23681f" d="M0 8.200 2.800 5.400 7 9.600 16.200.4 19 3.200 7 15.200Z"/></svg><div style="left:644px;top:520px;width:61px;height:18px;border:1px solid #98c496;background:#fff"></div><span style="left:674.45px;top:524px;font-size:9.72px;color:#6b9c6b;transform:translateX(-50%)">Подробнее</span><b style="left:718.8px;top:387px;font-size:10.5px;color:#23681f;font-weight:700">4 531.22</b><b style="left:718.8px;top:411px;font-size:10.5px;color:#23681f;font-weight:700">4 531.22</b><svg style="left:763.3px;top:413.2px;width:9.5px;height:7.5px" viewBox="0 0 19 15"><path fill="#23681f" d="M0 8.200 2.800 5.400 7 9.600 16.200.4 19 3.200 7 15.200Z"/></svg><div style="left:718px;top:520px;width:62px;height:18px;border:1px solid #98c496;background:#fff"></div><span style="left:749.05px;top:524px;font-size:9.72px;color:#6b9c6b;transform:translateX(-50%)">Подробнее</span><b style="left:793px;top:387px;font-size:10.5px;color:#23681f;font-weight:700">3 999.41</b><b style="left:793px;top:411px;font-size:10.5px;color:#23681f;font-weight:700">3 999.41</b><svg style="left:837.5px;top:413.2px;width:9.5px;height:7.5px" viewBox="0 0 19 15"><path fill="#23681f" d="M0 8.200 2.800 5.400 7 9.600 16.200.4 19 3.200 7 15.200Z"/></svg><div style="left:793px;top:520px;width:61px;height:18px;border:1px solid #98c496;background:#fff"></div><span style="left:823.25px;top:524px;font-size:9.72px;color:#6b9c6b;transform:translateX(-50%)">Подробнее</span><b style="left:867.4px;top:387px;font-size:10.5px;color:#23681f;font-weight:700">2 570.13</b><b style="left:867.4px;top:411px;font-size:10.5px;color:#23681f;font-weight:700">2 570.13</b><svg style="left:911.9px;top:413.2px;width:9.5px;height:7.5px" viewBox="0 0 19 15"><path fill="#23681f" d="M0 8.200 2.800 5.400 7 9.600 16.200.4 19 3.200 7 15.200Z"/></svg><div style="left:867px;top:520px;width:61px;height:18px;border:1px solid #98c496;background:#fff"></div><span style="left:897.65px;top:524px;font-size:9.72px;color:#6b9c6b;transform:translateX(-50%)">Подробнее</span><b style="left:941.6px;top:387px;font-size:10.5px;color:#23681f;font-weight:700">2 656.26</b><b style="left:941.6px;top:411px;font-size:10.5px;color:#23681f;font-weight:700">2 656.26</b><svg style="left:986.1px;top:413.2px;width:9.5px;height:7.5px" viewBox="0 0 19 15"><path fill="#23681f" d="M0 8.200 2.800 5.400 7 9.600 16.200.4 19 3.200 7 15.200Z"/></svg><div style="left:941px;top:520px;width:62px;height:18px;border:1px solid #98c496;background:#fff"></div><span style="left:971.85px;top:524px;font-size:9.72px;color:#6b9c6b;transform:translateX(-50%)">Подробнее</span>
<!-- section header -->
<h2 style="left:340.5px;top:555px;font-size:14.6px;color:#4286c0;line-height:1.2">Начисление за Август 2025 <span style="position:static;font-size:12.86px;color:#2f7d32">(Оплачено)</span></h2><div style="left:340px;top:579px;width:966px;height:1px;border-top:1px dotted #8fb7d8"></div><div style="left:1139.8px;top:550.8px;width:166px;height:27px;background:#87b87f"><svg style="left:9.5px;top:8.2px;width:10px;height:11.5px" viewBox="0 0 20 23"><path fill="#fff" fill-rule="evenodd" d="M1.300 0h11.200L20 7.500v14.200c0 .7-.6 1.300-1.300 1.300H1.300C.6 23 0 22.400 0 21.700V1.300C0 .6.600 0 1.300 0ZM1.800 1.800v19.400h16.400V9.200h-7.400V1.800ZM12.600 2.600v4.800h4.800Z"/><path fill="#fff" d="M4.500 11.500h11v1.700h-11ZM4.500 14.800h11v1.700h-11ZM4.500 18.100h11v1.700h-11Z"/></svg></div><span style="left:1163.5px;top:559px;font-size:10.72px;color:#fff">Сформировать квитанцию</span>
<!-- sub tabs -->
<div style="left:339.7px;top:596.3px;width:99.4px;height:23.5px;background:#2b8bcc"></div><span style="left:389.4px;top:601px;font-size:11.64px;color:#fff;transform:translateX(-50%)">Общие данные</span><div style="left:443px;top:596px;width:145px;height:24px;background:#fff;border:1px solid #aaa"></div><span style="left:515.4px;top:601px;font-size:12.06px;color:#222;transform:translateX(-50%)">Настройки начислений</span><div style="left:591px;top:596px;width:162px;height:24px;background:#fff;border:1px solid #aaa"></div><span style="left:672px;top:601px;font-size:12.06px;color:#222;transform:translateX(-50%)">Расчетные площади дома</span><b style="left:339.7px;top:629px;font-size:10.3px;color:#181818;font-weight:700;letter-spacing:-.22px">Количество проживающих/собственников (в начислении):</b><span style="left:632.4px;top:629px;font-size:10.6px;color:#181818">3</span>
<!-- services table -->
<div style="left:339.7px;top:650.6px;width:967.2px;height:22.4px;background:#449cd3"></div><span style="left:346.1px;top:656px;font-size:10.1px;color:#fff">Услуга ЖКХ</span><span style="left:653.2px;top:656px;font-size:10.1px;color:#fff">Норматив</span><span style="left:733.5px;top:656px;font-size:10.1px;color:#fff">Способ расчета</span><span style="left:830.3px;top:656px;font-size:10.1px;color:#fff">Расход</span><span style="left:911px;top:656px;font-size:10.1px;color:#fff">Тариф</span><span style="left:991.3px;top:656px;font-size:10.1px;color:#fff">Начислено</span><span style="left:1071.8px;top:656px;font-size:10.1px;color:#fff">Льгота</span><span style="left:1152.2px;top:656px;font-size:10.1px;color:#fff">Перерасчет</span><span style="left:1233.2px;top:656px;font-size:10.1px;color:#fff">Итого</span><a style="left:346.1px;top:680px;font-size:12.03px;color:#2f72ab">Отсутствие отопления</a><span style="left:653.2px;top:680px;font-size:12.03px;color:#1c1c1c">2.35</span><span style="left:733.5px;top:680px;font-size:12.03px;color:#1c1c1c">по нормативу</span><span style="left:830.3px;top:680px;font-size:12.03px;color:#1c1c1c">-</span><span style="left:911px;top:680px;font-size:12.03px;color:#1c1c1c">7.35</span><span style="left:991.3px;top:680px;font-size:12.03px;color:#1c1c1c">252.84</span><span style="left:1071.8px;top:680px;font-size:12.03px;color:#1c1c1c">0.00</span><span style="left:1152.2px;top:680px;font-size:12.03px;color:#1c1c1c">0.00</span><span style="left:1233.2px;top:680px;font-size:12.03px;color:#1c1c1c">7.35</span><a style="left:346.1px;top:707px;font-size:12.03px;color:#2f72ab">Управление МКД</a><span style="left:653.2px;top:707px;font-size:12.03px;color:#1c1c1c">2.35</span><span style="left:733.5px;top:707px;font-size:12.03px;color:#1c1c1c">по тарифу</span><span style="left:830.3px;top:707px;font-size:12.03px;color:#1c1c1c">-</span><span style="left:911px;top:707px;font-size:12.03px;color:#1c1c1c">7.35</span><span style="left:991.3px;top:707px;font-size:12.03px;color:#1c1c1c">252.84</span><span style="left:1071.8px;top:707px;font-size:12.03px;color:#1c1c1c">0.00</span><span style="left:1152.2px;top:707px;font-size:12.03px;color:#1c1c1c">0.00</span><span style="left:1233.2px;top:707px;font-size:12.03px;color:#1c1c1c">7.35</span><a style="left:346.1px;top:735px;font-size:12.03px;color:#2f72ab">Текущий ремонт</a><span style="left:653.2px;top:735px;font-size:12.03px;color:#1c1c1c">2.35</span><span style="left:733.5px;top:735px;font-size:12.03px;color:#1c1c1c">по нормативу</span><span style="left:830.3px;top:735px;font-size:12.03px;color:#1c1c1c">-</span><span style="left:911px;top:735px;font-size:12.03px;color:#1c1c1c">7.35</span><span style="left:991.3px;top:735px;font-size:12.03px;color:#1c1c1c">252.84</span><span style="left:1071.8px;top:735px;font-size:12.03px;color:#1c1c1c">0.00</span><span style="left:1152.2px;top:735px;font-size:12.03px;color:#1c1c1c">0.00</span><span style="left:1233.2px;top:735px;font-size:12.03px;color:#1c1c1c">7.35</span><div style="left:339.7px;top:700px;width:967.2px;height:1px;background:#ececec"></div><div style="left:339.7px;top:728px;width:967.2px;height:1px;background:#ececec"></div>
</main>
</div></div>
</body>
</html>
